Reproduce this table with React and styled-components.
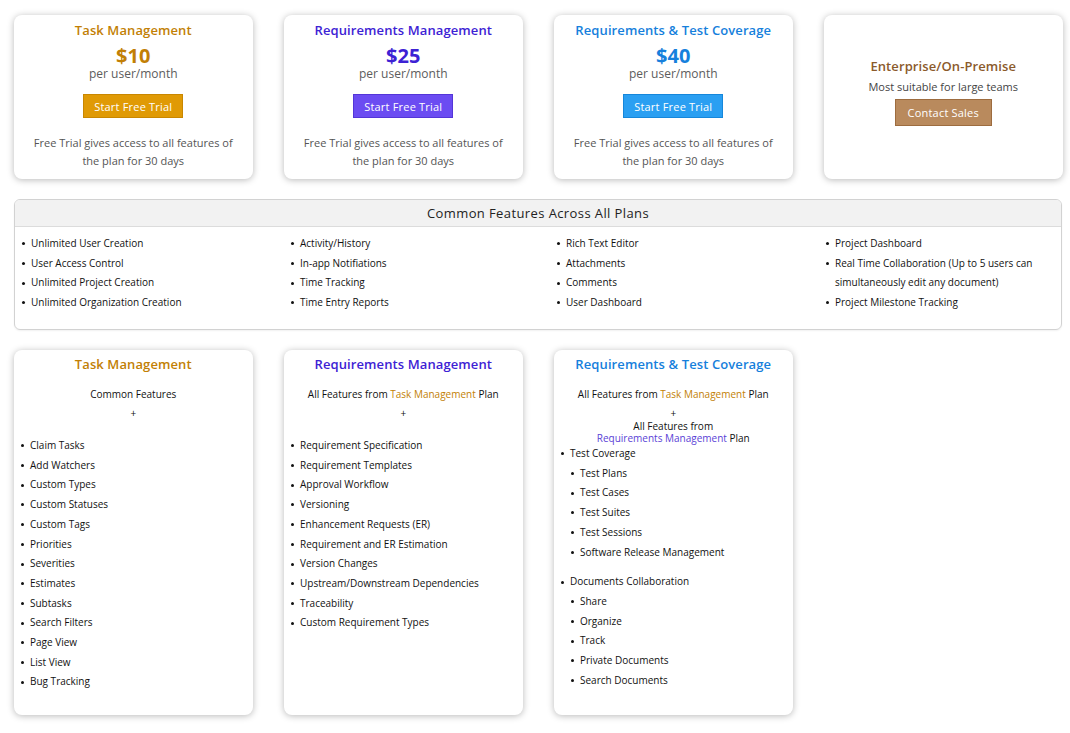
import React from 'react'
import styled, { createGlobalStyle } from 'styled-components'

const GlobalStyle = createGlobalStyle`
  body {
    margin: 0;
    background: #ffffff;
    font-family: "Open Sans", "DejaVu Sans", sans-serif;
    color: #222;
  }
`

const colors = {
  task: '#c27f05',
  req: '#3d22d4',
  test: '#1680dc',
  ent: '#8b5a2b',
}

const buttons = {
  task: { bg: '#e09a05', border: '#c98700' },
  req: { bg: '#6b4cf2', border: '#5436d8' },
  test: { bg: '#2a9ff2', border: '#1687db' },
  ent: { bg: '#b98a5d', border: '#9d6c3f' },
}

const plans = [
  { key: 'task', name: 'Task Management', price: '$10' },
  { key: 'req', name: 'Requirements Management', price: '$25' },
  { key: 'test', name: 'Requirements & Test Coverage', price: '$40' },
]

const common = [
  ['Unlimited User Creation', 'User Access Control', 'Unlimited Project Creation', 'Unlimited Organization Creation'],
  ['Activity/History', 'In-app Notifiations', 'Time Tracking', 'Time Entry Reports'],
  ['Rich Text Editor', 'Attachments', 'Comments', 'User Dashboard'],
  ['Project Dashboard', 'Real Time Collaboration (Up to 5 users can simultaneously edit any document)', 'Project Milestone Tracking'],
]

const taskFeatures = [
  'Claim Tasks', 'Add Watchers', 'Custom Types', 'Custom Statuses', 'Custom Tags', 'Priorities',
  'Severities', 'Estimates', 'Subtasks', 'Search Filters', 'Page View', 'List View', 'Bug Tracking',
]

const reqFeatures = [
  'Requirement Specification', 'Requirement Templates', 'Approval Workflow', 'Versioning',
  'Enhancement Requests (ER)', 'Requirement and ER Estimation', 'Version Changes',
  'Upstream/Downstream Dependencies', 'Traceability', 'Custom Requirement Types',
]

function App() {
  return (
    <Page>
      <GlobalStyle />
      <CardRow>
        {plans.map(p => (
          <PriceCard key={p.key}>
            <Title color={colors[p.key]}>{p.name}</Title>
            <Price color={colors[p.key]}>{p.price}</Price>
            <Per>per user/month</Per>
            <Button kind={p.key}>Start Free Trial</Button>
            <Note>Free Trial gives access to all features of the plan for 30 days</Note>
          </PriceCard>
        ))}
        <EnterpriseCard>
          <Title color={colors.ent}>Enterprise/On-Premise</Title>
          <Suit>Most suitable for large teams</Suit>
          <Button kind="ent" wide>Contact Sales</Button>
        </EnterpriseCard>
      </CardRow>

      <CommonBox>
        <CommonHead>Common Features Across All Plans</CommonHead>
        <CommonGrid>
          {common.map((col, i) => (
            <List key={i}>
              {col.map(item => <Item key={item}>{item}</Item>)}
            </List>
          ))}
        </CommonGrid>
      </CommonBox>

      <CardRow>
        <FeatureCard>
          <Title color={colors.task}>Task Management</Title>
          <Intro>Common Features</Intro>
          <Plus>+</Plus>
          <List spaced>
            {taskFeatures.map(f => <Item key={f}>{f}</Item>)}
          </List>
        </FeatureCard>
        <FeatureCard>
          <Title color={colors.req}>Requirements Management</Title>
          <Intro>All Features from <Tint color={colors.task}>Task Management</Tint> Plan</Intro>
          <Plus>+</Plus>
          <List spaced>
            {reqFeatures.map(f => <Item key={f}>{f}</Item>)}
          </List>
        </FeatureCard>
        <FeatureCard>
          <Title color={colors.test}>Requirements &amp; Test Coverage</Title>
          <Intro>All Features from <Tint color={colors.task}>Task Management</Tint> Plan</Intro>
          <Plus>+</Plus>
          <Intro tight>All Features from<br /><Tint color="#5a3fd6">Requirements Management</Tint> Plan</Intro>
          <List>
            <Item>Test Coverage
              <SubList>
                <Item>Test Plans</Item>
                <Item>Test Cases</Item>
                <Item>Test Suites</Item>
                <Item>Test Sessions</Item>
                <Item>Software Release Management</Item>
              </SubList>
            </Item>
            <Item gap>Documents Collaboration
              <SubList>
                <Item>Share</Item>
                <Item>Organize</Item>
                <Item>Track</Item>
                <Item>Private Documents</Item>
                <Item>Search Documents</Item>
              </SubList>
            </Item>
          </List>
        </FeatureCard>
        <div />
      </CardRow>
    </Page>
  )
}

export default App

const Page = styled.div`
  width: 1070px;
  padding: 15px 8px 18px 14px;
  box-sizing: border-box;
  display: flex;
  flex-direction: column;
  gap: 20px;
`

const CardRow = styled.div`
  display: grid;
  grid-template-columns: repeat(4, 238.5px);
  column-gap: 31.5px;
  align-items: stretch;
`

const Card = styled.div`
  background: #fff;
  border-radius: 8px;
  box-shadow: 0 1px 7px rgba(0, 0, 0, 0.28);
  box-sizing: border-box;
  text-align: center;
`

const PriceCard = styled(Card)`
  height: 164px;
  display: flex;
  flex-direction: column;
  align-items: center;
  padding: 7px 14px 0;
`

const EnterpriseCard = styled(Card)`
  height: 164px;
  display: flex;
  flex-direction: column;
  align-items: center;
  justify-content: center;
  padding-bottom: 10px;
`

const Title = styled.div`
  font-size: 13px;
  font-weight: 600;
  color: ${p => p.color};
  line-height: 17px;
  letter-spacing: 0.1px;
`

const Price = styled.div`
  font-size: 20px;
  font-weight: 700;
  color: ${p => p.color};
  line-height: 23px;
  margin-top: 5px;
`

const Per = styled.div`
  font-size: 12px;
  color: #5c5c5c;
  line-height: 14px;
`

const Button = styled.div`
  margin-top: ${p => (p.wide ? '5px' : '13px')};
  width: ${p => (p.wide ? '97px' : '100px')};
  height: ${p => (p.wide ? '27px' : '24px')};
  box-sizing: border-box;
  display: flex;
  align-items: center;
  justify-content: center;
  font-size: 11px;
  letter-spacing: 0.2px;
  color: #fff;
  background: ${p => buttons[p.kind].bg};
  border: 1px solid ${p => buttons[p.kind].border};
`

const Note = styled.div`
  margin-top: 16px;
  max-width: 212px;
  font-size: 11px;
  line-height: 18px;
  color: #555;
`

const Suit = styled.div`
  margin-top: 4px;
  font-size: 11px;
  color: #444;
`

const CommonBox = styled.div`
  border: 1px solid #d2d2d2;
  border-radius: 6px;
  height: 131px;
  box-sizing: border-box;
  overflow: hidden;
  box-shadow: 0 1px 2px rgba(0, 0, 0, 0.06);
`

const CommonHead = styled.div`
  height: 26px;
  background: #f2f2f2;
  border-bottom: 1px solid #dcdcdc;
  display: flex;
  align-items: center;
  justify-content: center;
  font-size: 13px;
  letter-spacing: 0.4px;
  color: #222;
`

const CommonGrid = styled.div`
  display: grid;
  grid-template-columns: 269px 266px 269px 1fr;
  padding: 7px 24px 0 7px;
`

const List = styled.ul`
  margin: ${p => (p.spaced ? '17px 0 0' : '0')};
  padding: 0;
  list-style: none;
  font-size: 10px;
  line-height: 19.7px;
  color: #111;
  text-align: left;
`

const SubList = styled.ul`
  margin: 0;
  padding: 0;
  list-style: none;
`

const Item = styled.li`
  margin-top: ${p => (p.gap ? '10px' : '0')};
  padding-left: 9px;
  text-indent: -9px;

  &::before {
    content: '';
    display: inline-block;
    width: 3px;
    height: 3px;
    border-radius: 50%;
    background: #111;
    margin: 0 6px 1px 0;
    vertical-align: middle;
  }

  ul {
    margin-left: 1px;
  }
`

const FeatureCard = styled(Card)`
  height: 365px;
  padding: 6px 7px 0;
`

const Intro = styled.div`
  font-size: 10px;
  line-height: ${p => (p.tight ? '12px' : '14px')};
  margin-top: ${p => (p.tight ? '1px' : '14px')};
  color: #111;
`

const Plus = styled.div`
  font-size: 10px;
  line-height: 12px;
  margin-top: 6px;
  color: #111;
`

const Tint = styled.span`
  color: ${p => p.color};
`
